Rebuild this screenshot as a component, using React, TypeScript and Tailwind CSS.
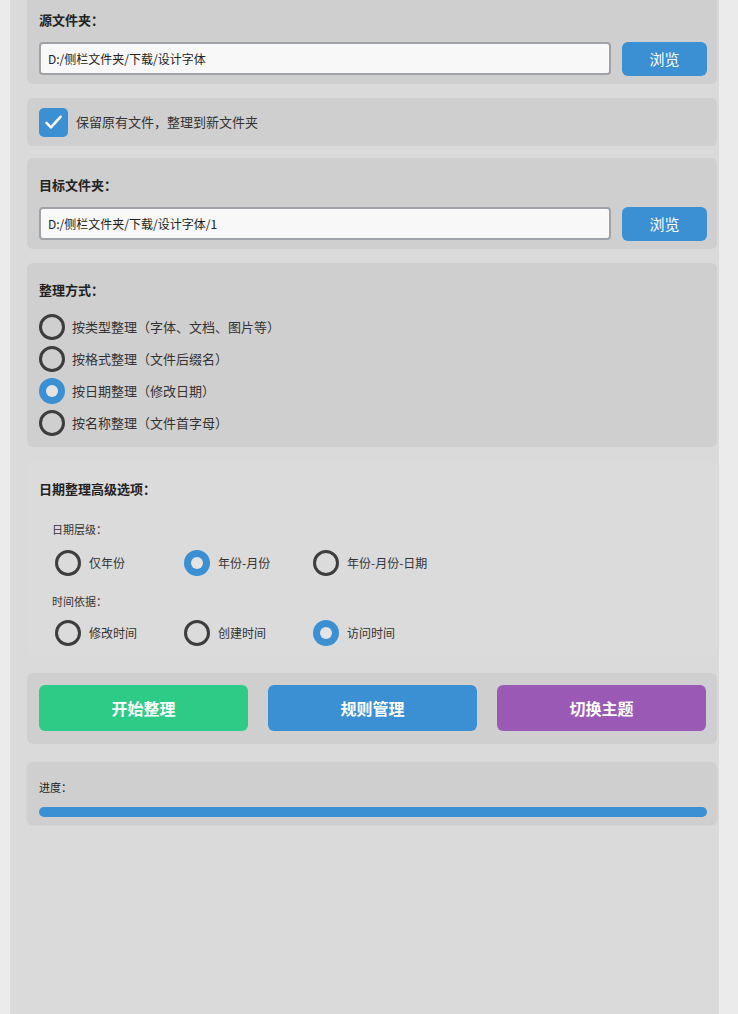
import React, { useState } from 'react';

const font = { fontFamily: '"Microsoft YaHei", "Noto Sans CJK SC", "Noto Sans", sans-serif' };

function Radio({ checked, onClick, label, labelClass }: { checked: boolean; onClick: () => void; label: string; labelClass: string }) {
  return (
    <div className="flex items-center cursor-pointer" onClick={onClick}>
      {checked ? (
        <span className="w-[26px] h-[26px] rounded-full bg-[#3b8fd3] flex items-center justify-center shrink-0">
          <span className="w-[12px] h-[12px] rounded-full bg-[#e4e4e4]" />
        </span>
      ) : (
        <span className="w-[26px] h-[26px] rounded-full border-[3px] border-[#3d3d3d] shrink-0" />
      )}
      <span className={labelClass}>{label}</span>
    </div>
  );
}

export default function App() {
  const [keep, setKeep] = useState(true);
  const [mode, setMode] = useState(2);
  const [level, setLevel] = useState(1);
  const [basis, setBasis] = useState(2);

  const modes = ['按类型整理（字体、文档、图片等）', '按格式整理（文件后缀名）', '按日期整理（修改日期）', '按名称整理（文件首字母）'];
  const levels = ['仅年份', '年份-月份', '年份-月份-日期'];
  const bases = ['修改时间', '创建时间', '访问时间'];

  return (
    <div className="min-h-screen bg-[#ebebeb] overflow-hidden" style={font}>
      <div className="ml-[10px] w-[709px] min-h-[1030px] bg-[#dadada] pl-[17px] pr-[2px] -mt-[7px]">
        {/* source folder */}
        <div className="w-[690px] bg-[#cfcfcf] rounded-[6px] pl-[12px] pr-[10px] pt-[17px] pb-[8px]">
          <div className="text-[13px] font-bold text-[#222] leading-[20px]">源文件夹：</div>
          <div className="flex mt-[12px] gap-[11px]">
            <input
              className="flex-1 h-[33px] bg-[#f8f8f8] border-2 border-[#9fa3a7] rounded-[4px] px-[7px] text-[12px] text-[#222] outline-none"
              defaultValue="D:/侧栏文件夹/下载/设计字体"
            />
            <button className="w-[85px] h-[34px] bg-[#3b8fd3] rounded-[6px] text-white text-[15px]">浏览</button>
          </div>
        </div>

        {/* keep files */}
        <div className="w-[690px] mt-[14px] h-[48px] bg-[#cfcfcf] rounded-[6px] pl-[12px] flex items-center">
          <span
            className="w-[29px] h-[29px] rounded-[5px] bg-[#3b8fd3] flex items-center justify-center cursor-pointer"
            onClick={() => setKeep(!keep)}
          >
            {keep && (
              <svg width="21" height="21" viewBox="0 0 24 24" fill="none" stroke="white" strokeWidth="3" strokeLinecap="round" strokeLinejoin="round">
                <path d="M4 12.5l5 5L20 5.5" />
              </svg>
            )}
          </span>
          <span className="ml-[8px] text-[13px] text-[#333]">保留原有文件，整理到新文件夹</span>
        </div>

        {/* target folder */}
        <div className="w-[690px] mt-[12px] bg-[#cfcfcf] rounded-[6px] pl-[12px] pr-[10px] pt-[17px] pb-[8px]">
          <div className="text-[13px] font-bold text-[#222] leading-[20px]">目标文件夹：</div>
          <div className="flex mt-[12px] gap-[11px]">
            <input
              className="flex-1 h-[33px] bg-[#f8f8f8] border-2 border-[#9fa3a7] rounded-[4px] px-[7px] text-[12px] text-[#222] outline-none"
              defaultValue="D:/侧栏文件夹/下载/设计字体/1"
            />
            <button className="w-[85px] h-[34px] bg-[#3b8fd3] rounded-[6px] text-white text-[15px]">浏览</button>
          </div>
        </div>

        {/* mode */}
        <div className="w-[690px] mt-[14px] bg-[#cfcfcf] rounded-[6px] pl-[12px] pt-[17px] pb-[11px]">
          <div className="text-[13px] font-bold text-[#222] leading-[20px]">整理方式：</div>
          <div className="mt-[14px] flex flex-col gap-[6px]">
            {modes.map((m, i) => (
              <Radio key={m} checked={mode === i} onClick={() => setMode(i)} label={m} labelClass="ml-[7px] text-[13px] text-[#333]" />
            ))}
          </div>
        </div>

        {/* date options */}
        <div className="w-[690px] mt-[14px] bg-[#dbdbdb] rounded-[6px] pl-[12px] pt-[18px] pb-[9px]">
          <div className="text-[13px] font-bold text-[#222] leading-[20px]">日期整理高级选项：</div>
          <div className="ml-[13px] mt-[21px] text-[11px] text-[#333] leading-[18px]">日期层级：</div>
          <div className="ml-[16px] mt-[12px] flex">
            {levels.map((l, i) => (
              <div key={l} className="w-[129px]">
                <Radio checked={level === i} onClick={() => setLevel(i)} label={l} labelClass="ml-[8px] text-[12px] text-[#333]" />
              </div>
            ))}
          </div>
          <div className="ml-[13px] mt-[16px] text-[11px] text-[#333] leading-[18px]">时间依据：</div>
          <div className="ml-[16px] mt-[10px] flex">
            {bases.map((b, i) => (
              <div key={b} className="w-[129px]">
                <Radio checked={basis === i} onClick={() => setBasis(i)} label={b} labelClass="ml-[8px] text-[12px] text-[#333]" />
              </div>
            ))}
          </div>
        </div>

        {/* actions */}
        <div className="w-[690px] mt-[18px] bg-[#cfcfcf] rounded-[6px] pl-[12px] pr-[11px] pt-[12px] pb-[13px] flex justify-between">
          <button className="w-[209px] h-[46px] rounded-[6px] bg-[#2ecb87] text-white text-[16px] font-bold">开始整理</button>
          <button className="w-[209px] h-[46px] rounded-[6px] bg-[#3b8fd3] text-white text-[16px] font-bold">规则管理</button>
          <button className="w-[209px] h-[46px] rounded-[6px] bg-[#9b59b6] text-white text-[16px] font-bold">切换主题</button>
        </div>

        {/* progress */}
        <div className="w-[690px] mt-[18px] bg-[#cfcfcf] rounded-[6px] pl-[12px] pr-[10px] pt-[16px] pb-[7px] shadow-[0_1px_2px_rgba(0,0,0,0.08)]">
          <div className="text-[11px] text-[#222] leading-[18px]">进度：</div>
          <div className="mt-[11px] h-[10px] rounded-full bg-[#3b8fd3]" />
        </div>
      </div>
    </div>
  );
}
